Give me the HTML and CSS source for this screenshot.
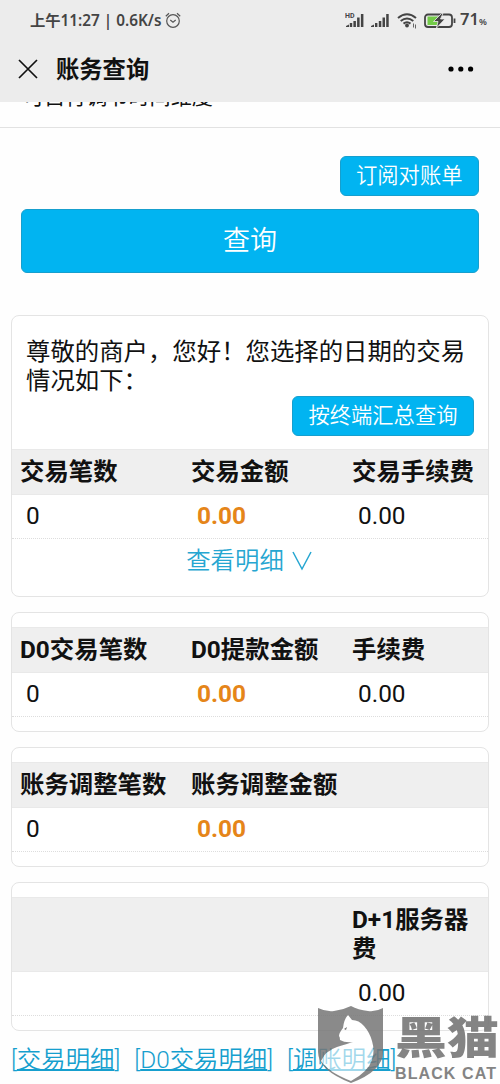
FILE: index.html
```html
<!DOCTYPE html>
<html lang="zh-CN">
<head>
<meta charset="utf-8">
<title>账务查询</title>
<link rel="stylesheet" href="styles.css">
</head>
<body>
<div class="screen">
  <header class="top">
    <div class="status">
      <span class="clock">上午11:27 | 0.6K/s</span>
      <svg class="alarm" width="16" height="17" viewBox="0 0 16 17"><g fill="none" stroke="#555" stroke-width="1.2"><circle cx="8" cy="9" r="6.3"/><path d="M.8 4.2 4 1.2M15.2 4.2 12 1.2M5.3 8 8 10.2l2.700-2.200"/></g></svg>
      <svg class="signals" width="112" height="20" viewBox="0 0 112 20">
        <g fill="#444">
          <text x="0" y="7.500" class="hd">HD</text>
          <path d="M1 17v-1l3-1.500V17zM4.800 17v-4h2.400v4zM8.400 17v-6h2.500v6zM12.100 17V7.500h2.500V17zM15.900 17V4h2.500v13z"/>
          <path d="M26 17v-1l3-1.500V17zM30 17v-4h2.400v4zM33.800 17v-6h2.500v6zM37.500 17V7.500h2.500V17zM41.200 17V4h2.500v13z"/>
          <circle cx="62" cy="15.500" r="1.900"/>
        </g>
        <g fill="none" stroke="#444" stroke-width="2"><path d="M53 8q9-7.500 18 0M55.700 11q6.300-5 12.600 0M58.500 13.600q3.500-2.600 7 0"/></g>
        <path d="M68.500 13.500v4m2-3v4" stroke="#666"/>
        <rect x="80" y="4.500" width="27" height="12.500" rx="3" fill="none" stroke="#444" stroke-width="1.800"/>
        <path d="M82.500 6.500H94v8.500H82.500z" fill="#73cb48"/><path d="M109.500 8.500v4.500" stroke="#444" stroke-width="1.800"/>
        <path d="m96.500 3.500-8 8h4.500l-1.500 6.500 8.500-9h-4.500l2.500-5.500z" fill="#444" stroke="#ececec" stroke-width=".8"/>
      </svg>
      <span class="percent">71<small>%</small></span>
    </div>
    <div class="nav">
      <svg width="20" height="20" viewBox="0 0 20 20"><path d="m1 1 18 18M19 1 1 19" stroke="#111" stroke-width="1.700" fill="none"/></svg>
      <h1>账务查询</h1>
      <svg class="more" width="26" height="6" viewBox="0 0 26 6"><circle cx="3" cy="3" r="2.600"/><circle cx="12.800" cy="3" r="2.600"/><circle cx="22.600" cy="3" r="2.600"/></svg>
    </div>
  </header>
  <div class="hint"><p>可自行调节时间维度</p></div>
  <main>
    <div class="actions">
      <button class="btn">订阅对账单</button>
      <button class="btn wide">查询</button>
    </div>
    <section class="card first">
      <p class="greet">尊敬的商户，您好！您选择的日期的交易情况如下：</p>
      <div class="right"><button class="btn">按终端汇总查询</button></div>
      <div class="row head"><span>交易笔数</span><span>交易金额</span><span>交易手续费</span></div>
      <div class="row vals"><span>0</span><b>0.00</b><span>0.00</span></div>
      <a class="detail">查看明细<svg width="20" height="20" viewBox="0 0 20 20"><path d="m1 1 9 17 9-17" fill="none" stroke="#26a6d1" stroke-width="1.500"/></svg></a>
    </section>
    <section class="card">
      <div class="row head"><span>D0交易笔数</span><span>D0提款金额</span><span>手续费</span></div>
      <div class="row vals"><span>0</span><b>0.00</b><span>0.00</span></div>
    </section>
    <section class="card">
      <div class="row head"><span>账务调整笔数</span><span>账务调整金额</span><span></span></div>
      <div class="row vals"><span>0</span><b>0.00</b><span></span></div>
    </section>
    <section class="card">
      <div class="row head"><span></span><span></span><span>D+1服务器费</span></div>
      <div class="row vals"><span></span><span></span><span>0.00</span></div>
    </section>
    <div class="links"><span>[<a>交易明细</a>]</span><span>[<a>D0交易明细</a>]</span><span>[<a>调账明细</a>]</span></div>
  </main>
  <div class="watermark">
    <svg width="68" height="78" viewBox="0 0 68 78">
      <path fill="#fff" fill-opacity=".6" d="m31 9 4 5q7 0 12 6 6 7 8 15 3 10 0 19-4 12-20 21Q11 66 4 55q4-10 16-14 10-3 16-5-8 1-13-2 0-3-1-4 0-3 4-8 1-9 5-13z"/>
      <path fill="#777" fill-opacity=".86" fill-rule="evenodd" d="M1 2q8 4 16 3 9-1 17-5 7 4 17 5 8 1 15-3v44q0 19-32 31Q1 64 1 46zM31 9q-4 4-5 13-4 5-4 8 1 1 1 4 5 3 13 2-6 2-16 5Q8 45 4 55q7 11 30 20 17-9 21-21 3-9 0-19-2-8-8-15-5-6-12-6z"/>
      <path fill="#777" d="m27 23 3-2-1 3z"/>
    </svg>
    <div class="brand"><div class="cn">黑猫</div><div class="en">BLACK CAT</div></div>
  </div>
</div>
</body>
</html>
```
FILE: styles.css
```css
* { box-sizing: border-box; }
body { margin: 0; background: #fefefe; color: #111; font-family: Roboto, "Noto Sans CJK SC", sans-serif; }
.screen { position: relative; width: 500px; height: 1084px; overflow: hidden; }
.top { height: 102px; background: #ececec; }
.status { display: flex; align-items: center; height: 40px; padding: 0 13px 0 30px; color: #444; }
.clock { font-family: "Noto Sans", "Noto Sans CJK SC", sans-serif; font-weight: 600; font-size: 15.3px; line-height: 20px; white-space: nowrap; }
.alarm { margin-left: 4px; }
.signals { margin-left: auto; margin-right: 3px; }
.hd { font: 700 7px Roboto, sans-serif; }
.percent { width: 27px; font-family: "Noto Sans", sans-serif; font-weight: 600; font-size: 16.5px; line-height: 20px; white-space: nowrap; }
.percent small { font-size: 9px; }
.nav { display: flex; align-items: center; height: 57px; padding: 0 26px 0 18px; }
.nav h1 { margin: 2px 0 0 18px; font-size: 23.3px; font-weight: 700; line-height: 32px; }
.more { margin-left: auto; }
.hint { height: 26px; overflow: hidden; border-bottom: 1px solid #e2e2e2; }
.hint p { margin: -21px 0 0 23px; font-size: 21.1px; line-height: 32px; }
main { padding: 28px 11px 0; }
.actions { display: flex; flex-direction: column; align-items: flex-end; gap: 13px; padding: 0 10px; }
.btn { height: 40px; padding: 0 15.5px 1px; border: 1px solid #169fce; border-radius: 6px; background: #01b4f1; color: #fff; font: 350 21.3px/34px Roboto, "Noto Sans CJK SC", sans-serif; white-space: nowrap; }
.btn.wide { width: 100%; height: 64px; padding-bottom: 0; font-size: 27px; }
.card { margin-top: 15px; padding: 14px 0; border: 1px solid #e4e4e4; border-radius: 8px; background: #fff; font-size: 24.4px; line-height: 29px; }
.card.first { margin-top: 42px; height: 282px; padding-top: 21px; }
.greet { margin: 0 14px; }
.right { display: flex; justify-content: flex-end; margin: 1px 14px 13px; }
.row { display: grid; grid-template-columns: 171px 161px 1fr; }
.row > * { padding-left: 8px; }
.head { min-height: 46px; padding: 7px 0 8px; background: #efefef; border: solid #e9e9e9; border-width: 1px 0; font-weight: 700; }
.vals { height: 44px; padding: 6px 0 8px; border-bottom: 1px dotted #ddd; }
.row.vals > * { padding-left: 14px; }
.vals b { color: #e58519; }
.detail { display: flex; justify-content: center; align-items: center; gap: 8px; height: 43px; margin-right: 2px; color: #26a6d1; font-weight: 350; }
.links { display: flex; gap: 14px; margin-top: 14px; color: #169fce; font-size: 24.4px; font-weight: 350; line-height: 29px; white-space: nowrap; }
.links a { text-decoration: underline; text-decoration-thickness: 2px; text-underline-offset: 1px; text-decoration-skip-ink: none; }
.watermark { position: absolute; left: 317px; top: 1006px; display: flex; gap: 10px; color: #777; }
.brand { padding-top: 3px; white-space: nowrap; opacity: .9; }
.cn { font: 900 52px/52px "Noto Sans CJK SC", sans-serif; transform: scaleY(.86); transform-origin: 50% 50%; }
.en { margin-top: 3px; font: 700 16px/20px "Liberation Sans", sans-serif; letter-spacing: 1.1px; }
```
